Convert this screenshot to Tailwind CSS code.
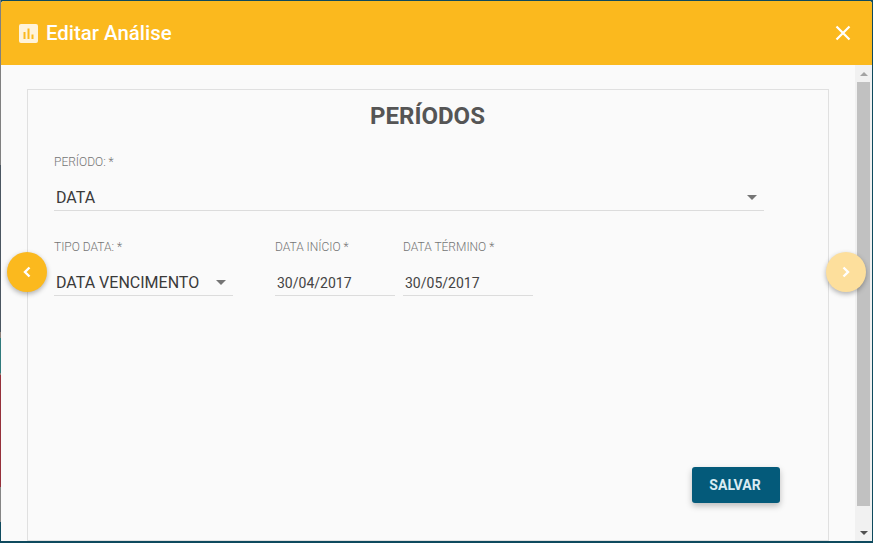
<!DOCTYPE html>
<html>
<head>
<meta charset="utf-8">
<script src="https://cdn.jsdelivr.net/npm/@tailwindcss/browser@4"></script>
</head>
<body class="w-[873px] h-[543px] overflow-hidden bg-[#0e4a5e] font-['Roboto',sans-serif]">
<div class="relative flex h-[543px] w-[873px]">
  <div class="flex w-px shrink-0 flex-col">
    <div class="h-[165px] bg-[#808080]"></div>
    <div class="h-[167px] bg-[#4a5560]"></div>
    <div class="h-[6px] bg-[#8a7f78]"></div>
    <div class="h-[35px] bg-[#2f7a7c]"></div>
    <div class="h-[2px] bg-[#8a7f78]"></div>
    <div class="h-[112px] bg-[#96303a]"></div>
    <div class="h-[35px] bg-[#858585]"></div>
    <div class="flex-1 bg-[#0e4a5e]"></div>
  </div>
  <div class="mt-px mr-px mb-[2px] flex min-w-0 flex-1 flex-col overflow-hidden rounded-tl-[3px] rounded-tr-[3px] bg-[#fafafa]">
    <header class="flex h-[64px] shrink-0 items-center justify-between bg-[#fbb91e] pr-[21px] pl-[18px] text-white">
      <div class="flex items-center gap-[8px]">
        <svg width="19" height="19" viewBox="0 0 19 19" class="mt-px"><path fill="#fff3da" fill-rule="evenodd" d="M2 0h15a2 2 0 0 1 2 2v15a2 2 0 0 1-2 2H2a2 2 0 0 1-2-2V2a2 2 0 0 1 2-2zM4.500 8v7h2V8zM8.500 4.500V15h2V4.500zM12.500 10.500V15h2v-4.500z"/></svg>
        <h1 class="text-[20.400px] leading-[24px] font-medium">Editar Análise</h1>
      </div>
      <svg width="16" height="16" viewBox="0 0 16 16"><path d="M1.500 1.500l13 13M14.500 1.500l-13 13" stroke="#fff" stroke-width="2.200" fill="none"/></svg>
    </header>
    <div class="flex min-h-0 flex-1">
      <main class="min-w-0 flex-1 pt-[24px] pl-[26px] pr-[26px]">
        <section class="h-[452px] border border-[#e0e0e0] bg-[#fafafa] pl-[26px]">
          <h2 class="pt-[11px] pr-[27px] text-center text-[24px] leading-[30px] font-bold text-[#555555]">PERÍODOS</h2>
          <div class="mt-[24px] w-[710px]">
            <label class="block text-[12px] leading-[14px] font-light text-[#757575]">PERÍODO: *</label>
            <div class="mt-[16px] flex h-[26px] items-center justify-between border-b border-[#dcdcdc] pr-[7px] pl-[2px]">
              <span class="pt-px text-[16px] leading-[20px] text-[#3a3a3a]">DATA</span>
              <span class="h-0 w-0 border-x-[5px] border-t-[5px] border-x-transparent border-t-[#757575]"></span>
            </div>
          </div>
          <div class="mt-[29px] flex">
            <div class="w-[179px]">
              <label class="block text-[12px] leading-[14px] font-light text-[#757575]">TIPO DATA: *</label>
              <div class="mt-[16px] flex h-[26px] items-center justify-between border-b border-[#dcdcdc] pr-[7px] pl-[2px]">
                <span class="pt-px text-[16px] leading-[20px] text-[#3a3a3a]">DATA VENCIMENTO</span>
                <span class="h-0 w-0 border-x-[5px] border-t-[5px] border-x-transparent border-t-[#757575]"></span>
              </div>
            </div>
            <div class="ml-[42px] w-[120px]">
              <label class="block text-[12px] leading-[14px] font-light text-[#757575]">DATA INÍCIO *</label>
              <div class="mt-[16px] flex h-[26px] items-center border-b border-[#dcdcdc] pl-[2px]">
                <span class="text-[14px] leading-[20px] text-[#444444]">30/04/2017</span>
              </div>
            </div>
            <div class="ml-[8px] w-[130px]">
              <label class="block text-[12px] leading-[14px] font-light text-[#757575]">DATA TÉRMINO *</label>
              <div class="mt-[16px] flex h-[26px] items-center border-b border-[#dcdcdc] pl-[2px]">
                <span class="text-[14px] leading-[20px] text-[#444444]">30/05/2017</span>
              </div>
            </div>
          </div>
          <div class="mt-[171px] flex justify-end pr-[48px]">
            <button class="h-[36px] w-[88px] rounded-[3px] bg-[#045a7a] pr-[2px] text-[14px] font-bold text-[#d9ecf3] shadow-[0_3px_6px_rgba(0,0,0,0.25)]">SALVAR</button>
          </div>
        </section>
      </main>
      <aside class="flex w-[17px] shrink-0 flex-col bg-[#f1f1f1]">
        <div class="flex h-[17px] items-center justify-center">
          <span class="h-0 w-0 border-x-[4px] border-b-[4px] border-x-transparent border-b-[#a3a3a3]"></span>
        </div>
        <div class="mx-[2px] h-[424px] bg-[#c1c1c1]"></div>
        <div class="flex flex-1 items-end justify-center pb-[6px]">
          <span class="h-0 w-0 border-x-[4px] border-t-[4px] border-x-transparent border-t-[#505050]"></span>
        </div>
      </aside>
    </div>
  </div>
  <button class="absolute top-[252px] left-[7px] flex h-[40px] w-[40px] items-center justify-center rounded-full bg-[#fbb91e] shadow-[0_2px_5px_rgba(0,0,0,0.3)]">
    <svg width="10" height="12" viewBox="0 0 10 12"><path d="M7.500 1.500L3 6l4.500 4.500" stroke="#fff" stroke-width="2.400" fill="none"/></svg>
  </button>
  <button class="absolute top-[252px] left-[826px] flex h-[40px] w-[40px] items-center justify-center rounded-full bg-[#fddf9c] shadow-[0_2px_5px_rgba(0,0,0,0.3)]">
    <svg width="10" height="12" viewBox="0 0 10 12"><path d="M2.500 1.500L7 6l-4.500 4.500" stroke="#fff" stroke-width="2.400" fill="none"/></svg>
  </button>
</div>
</body>
</html>
